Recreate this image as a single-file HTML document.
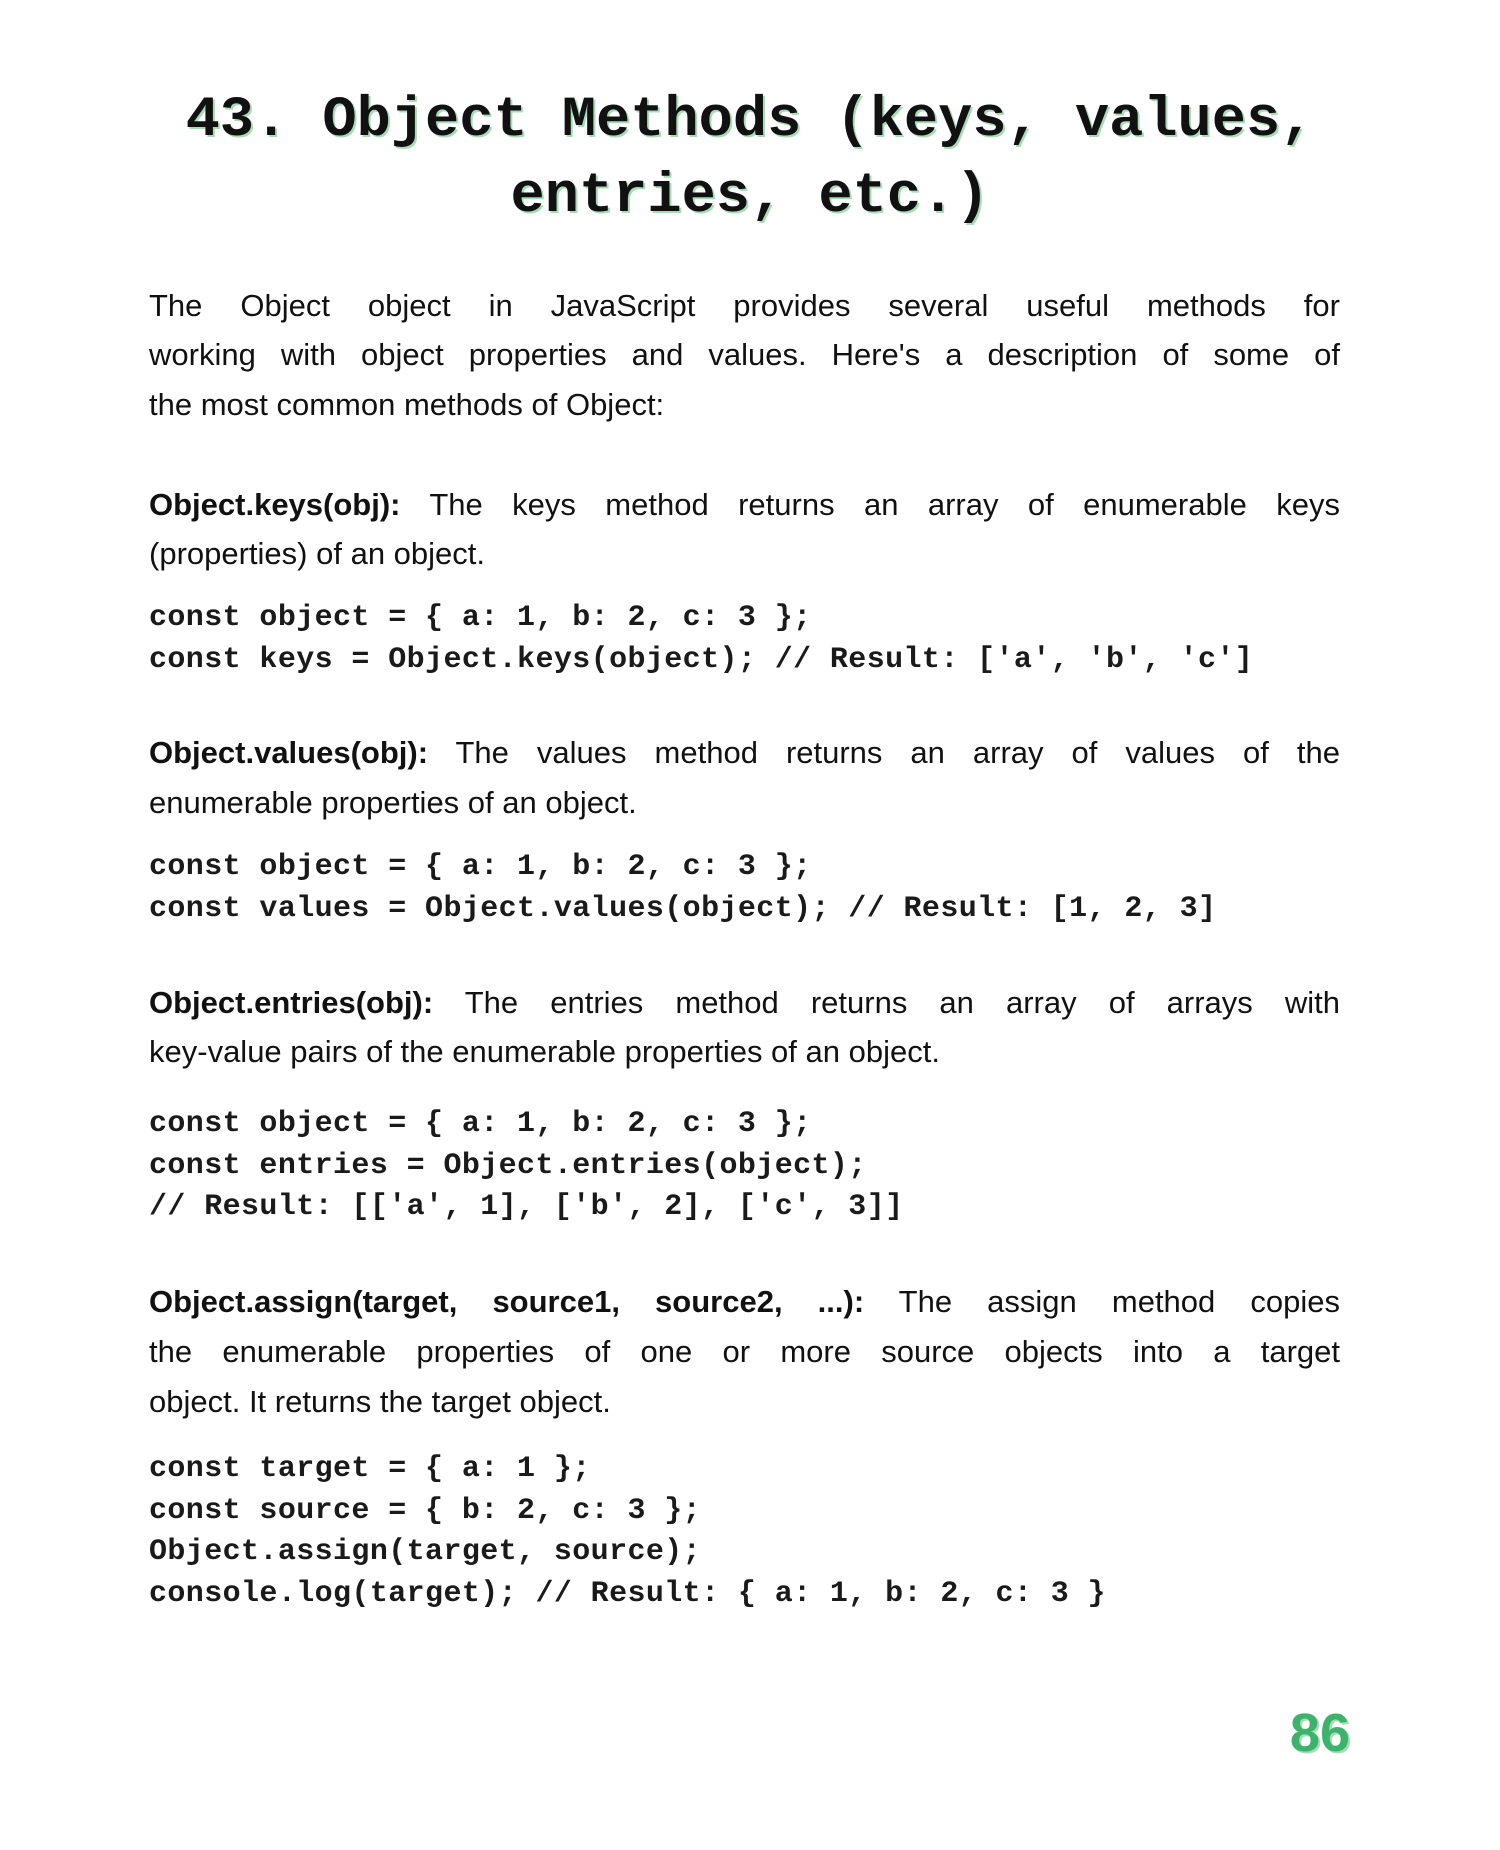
<!DOCTYPE html>
<html><head><meta charset="utf-8"><style>
html,body{margin:0;padding:0;background:#fff;}
body{width:1500px;height:1850px;position:relative;overflow:hidden;color:#111;}
.t{position:absolute;left:0;width:1500px;text-align:center;font-family:"Liberation Mono",monospace;font-weight:bold;font-size:57px;line-height:70px;text-shadow:2px 2px 0 #a8dcb6;color:#111;}
.p{position:absolute;left:149px;width:1191px;font-family:"Liberation Sans",sans-serif;font-size:31px;line-height:49px;white-space:nowrap;}
.j{text-align:justify;text-align-last:justify;white-space:normal;}
.c{position:absolute;left:149px;font-family:"Liberation Mono",monospace;font-weight:bold;font-size:30px;letter-spacing:0.4px;line-height:41.5px;white-space:pre;color:#1a1a1a;}
b{font-weight:bold;}
.n{position:absolute;right:150px;top:1703px;font-family:"Liberation Sans",sans-serif;font-weight:bold;font-size:54px;line-height:60px;color:#3cb36b;text-shadow:2px 2px 0 #a8dcb6;}
</style></head><body>
<div class="t" style="top:86px">43. Object Methods (keys, values,</div>
<div class="t" style="top:162px">entries, etc.)</div>

<div class="p j" style="top:281px">The Object object in JavaScript provides several useful methods for</div>
<div class="p j" style="top:330px">working with object properties and values. Here's a description of some of</div>
<div class="p" style="top:380px">the most common methods of Object:</div>

<div class="p j" style="top:480px"><b>Object.keys(obj):</b> The keys method returns an array of enumerable keys</div>
<div class="p" style="top:529px">(properties) of an object.</div>
<div class="c" style="top:598px">const object = { a: 1, b: 2, c: 3 };
const keys = Object.keys(object); // Result: ['a', 'b', 'c']</div>

<div class="p j" style="top:728px"><b>Object.values(obj):</b> The values method returns an array of values of the</div>
<div class="p" style="top:778px">enumerable properties of an object.</div>
<div class="c" style="top:847px">const object = { a: 1, b: 2, c: 3 };
const values = Object.values(object); // Result: [1, 2, 3]</div>

<div class="p j" style="top:978px"><b>Object.entries(obj):</b> The entries method returns an array of arrays with</div>
<div class="p" style="top:1027px">key-value pairs of the enumerable properties of an object.</div>
<div class="c" style="top:1104px">const object = { a: 1, b: 2, c: 3 };
const entries = Object.entries(object);
// Result: [['a', 1], ['b', 2], ['c', 3]]</div>

<div class="p j" style="top:1277px"><b>Object.assign(target, source1, source2, ...):</b> The assign method copies</div>
<div class="p j" style="top:1327px">the enumerable properties of one or more source objects into a target</div>
<div class="p" style="top:1377px">object. It returns the target object.</div>
<div class="c" style="top:1449px">const target = { a: 1 };
const source = { b: 2, c: 3 };
Object.assign(target, source);
console.log(target); // Result: { a: 1, b: 2, c: 3 }</div>

<div class="n">86</div>
</body></html>
